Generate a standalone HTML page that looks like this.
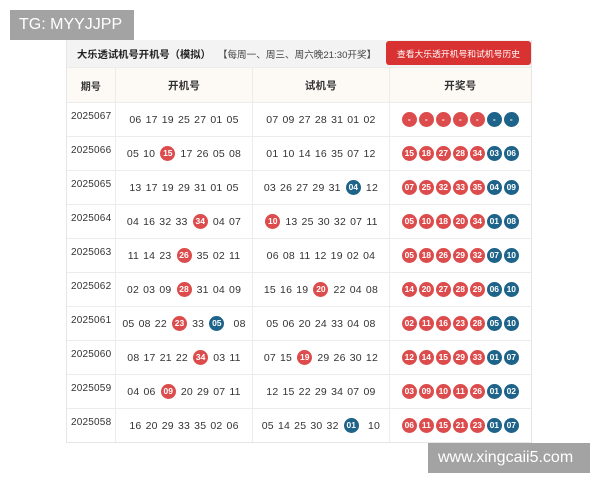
<!DOCTYPE html>
<html><head><meta charset="utf-8"><style>
*{margin:0;padding:0;box-sizing:border-box}
body{width:600px;height:480px;background:#fff;position:relative;font-family:"Liberation Sans","Noto Sans CJK SC",sans-serif;overflow:hidden}
.wm{position:absolute;background:#a3a3a3;color:#fff;font-size:16px;line-height:30px}
.tbl{position:absolute;left:66px;top:40px;width:466px;border:1px solid #e6e6e6;border-top:none}
.hd{height:27px;background:#f3f3f3;display:flex;align-items:center;color:#222;padding-left:10px;position:relative;white-space:nowrap}
.hd b{font-weight:bold;font-size:10.3px}
.hd .s{color:#444;margin-left:7px;font-size:9.6px}
.btn{position:absolute;left:319px;top:1px;width:145px;height:24px;background:#d93232;border-radius:3px;color:#fff;font-size:8.8px;display:flex;align-items:center;justify-content:center}
.row{display:flex;height:34px;border-top:1px solid #ececec}
.row>div{display:flex;align-items:center;justify-content:center;border-left:1px solid #ececec;font-size:10.5px;color:#333;letter-spacing:.2px;word-spacing:1px}
.row>div:first-child{border-left:none;justify-content:flex-start;padding-left:4px;padding-bottom:6px;font-size:10px}
.c0{width:48px}.c1{width:138px}.c2{width:137px}.c3{width:143px}
.th{background:#fdfaf5}.th>div{font-weight:bold;font-size:10.5px;color:#333}
.th>div:first-child{justify-content:center;padding:0}
.b{display:inline-block;width:15px;height:15px;border-radius:50%;color:#fff;font-size:8.5px;font-weight:bold;text-align:center;line-height:15px;letter-spacing:0;margin:0 1px}
.r{background:#dd4c4c}.u{background:#1e6389}
</style></head><body>
<div class="wm" style="left:10px;top:10px;width:124px;padding-left:9px">TG: MYYJJPP</div>
<div class="tbl">
<div class="hd"><b>大乐透试机号开机号（模拟）</b><span class="s">【每周一、周三、周六晚21:30开奖】</span><div class="btn">查看大乐透开机号和试机号历史</div></div>
<div class="row th" style="height:35px"><div class="c0">期号</div><div class="c1">开机号</div><div class="c2">试机号</div><div class="c3">开奖号</div></div>
<div class="row"><div class="c0">2025067</div><div class="c1">06 17 19 25 27 01 05</div><div class="c2">07 09 27 28 31 01 02</div><div class="c3"><span class="b r">-</span><span class="b r">-</span><span class="b r">-</span><span class="b r">-</span><span class="b r">-</span><span class="b u">-</span><span class="b u">-</span></div></div>
<div class="row"><div class="c0">2025066</div><div class="c1">05 10&nbsp;<span class="b r">15</span>&nbsp;17 26 05 08</div><div class="c2">01 10 14 16 35 07 12</div><div class="c3"><span class="b r">15</span><span class="b r">18</span><span class="b r">27</span><span class="b r">28</span><span class="b r">34</span><span class="b u">03</span><span class="b u">06</span></div></div>
<div class="row"><div class="c0">2025065</div><div class="c1">13 17 19 29 31 01 05</div><div class="c2">03 26 27 29 31&nbsp;<span class="b u">04</span>&nbsp;12</div><div class="c3"><span class="b r">07</span><span class="b r">25</span><span class="b r">32</span><span class="b r">33</span><span class="b r">35</span><span class="b u">04</span><span class="b u">09</span></div></div>
<div class="row"><div class="c0">2025064</div><div class="c1">04 16 32 33&nbsp;<span class="b r">34</span>&nbsp;04 07</div><div class="c2"><span class="b r">10</span>&nbsp;13 25 30 32 07 11</div><div class="c3"><span class="b r">05</span><span class="b r">10</span><span class="b r">18</span><span class="b r">20</span><span class="b r">34</span><span class="b u">01</span><span class="b u">08</span></div></div>
<div class="row"><div class="c0">2025063</div><div class="c1">11 14 23&nbsp;<span class="b r">26</span>&nbsp;35 02 11</div><div class="c2">06 08 11 12 19 02 04</div><div class="c3"><span class="b r">05</span><span class="b r">18</span><span class="b r">26</span><span class="b r">29</span><span class="b r">32</span><span class="b u">07</span><span class="b u">10</span></div></div>
<div class="row"><div class="c0">2025062</div><div class="c1">02 03 09&nbsp;<span class="b r">28</span>&nbsp;31 04 09</div><div class="c2">15 16 19&nbsp;<span class="b r">20</span>&nbsp;22 04 08</div><div class="c3"><span class="b r">14</span><span class="b r">20</span><span class="b r">27</span><span class="b r">28</span><span class="b r">29</span><span class="b u">06</span><span class="b u">10</span></div></div>
<div class="row"><div class="c0">2025061</div><div class="c1">05 08 22&nbsp;<span class="b r">23</span>&nbsp;33&nbsp;<span class="b u">05</span>&nbsp; 08</div><div class="c2">05 06 20 24 33 04 08</div><div class="c3"><span class="b r">02</span><span class="b r">11</span><span class="b r">16</span><span class="b r">23</span><span class="b r">28</span><span class="b u">05</span><span class="b u">10</span></div></div>
<div class="row"><div class="c0">2025060</div><div class="c1">08 17 21 22&nbsp;<span class="b r">34</span>&nbsp;03 11</div><div class="c2">07 15&nbsp;<span class="b r">19</span>&nbsp;29 26 30 12</div><div class="c3"><span class="b r">12</span><span class="b r">14</span><span class="b r">15</span><span class="b r">29</span><span class="b r">33</span><span class="b u">01</span><span class="b u">07</span></div></div>
<div class="row"><div class="c0">2025059</div><div class="c1">04 06&nbsp;<span class="b r">09</span>&nbsp;20 29 07 11</div><div class="c2">12 15 22 29 34 07 09</div><div class="c3"><span class="b r">03</span><span class="b r">09</span><span class="b r">10</span><span class="b r">11</span><span class="b r">26</span><span class="b u">01</span><span class="b u">02</span></div></div>
<div class="row"><div class="c0">2025058</div><div class="c1">16 20 29 33 35 02 06</div><div class="c2">05 14 25 30 32&nbsp;<span class="b u">01</span>&nbsp; 10</div><div class="c3"><span class="b r">06</span><span class="b r">11</span><span class="b r">15</span><span class="b r">21</span><span class="b r">23</span><span class="b u">01</span><span class="b u">07</span></div></div>
</div>
<div class="wm" style="left:428px;top:443px;width:162px;height:30px;padding-left:10px">www.xingcaii5.com</div>
</body></html>
